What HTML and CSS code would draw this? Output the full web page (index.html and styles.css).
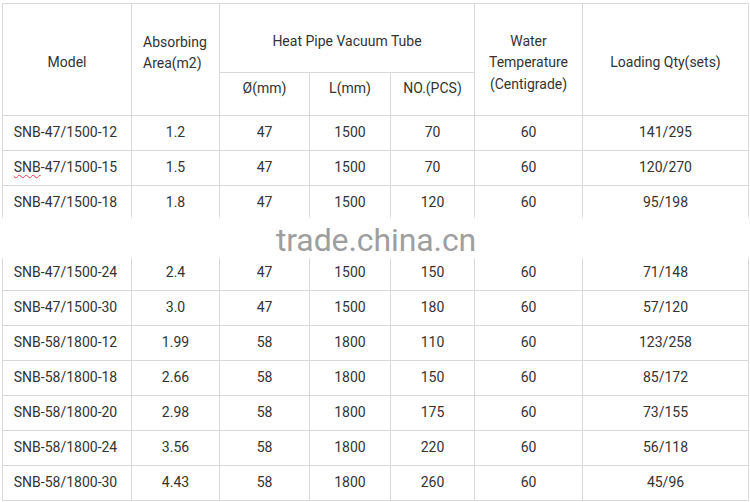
FILE: index.html
```html
<!DOCTYPE html>
<html>
<head>
<meta charset="utf-8">
<link rel="stylesheet" href="styles.css">
</head>
<body>
<div class="page">
  <div class="sheet">
    <table class="spec">
      <colgroup>
        <col class="c1"><col class="c2"><col class="c3"><col class="c4"><col class="c5"><col class="c6"><col class="c7">
      </colgroup>
      <thead>
        <tr class="h1">
          <th rowspan="2">Model</th>
          <th rowspan="2" class="left">Absorbing Area(m2)</th>
          <th colspan="3">Heat Pipe Vacuum Tube</th>
          <th rowspan="2" class="water">Water Temperature (Centigrade)</th>
          <th rowspan="2">Loading Qty(sets)</th>
        </tr>
        <tr class="h2">
          <th>Ø(mm)</th>
          <th>L(mm)</th>
          <th>NO.(PCS)</th>
        </tr>
      </thead>
      <tbody>
        <tr><td class="model">SNB-47/1500-12</td><td>1.2</td><td>47</td><td>1500</td><td>70</td><td>60</td><td>141/295</td></tr>
        <tr><td class="model"><span class="spell">SNB</span>-47/1500-15</td><td>1.5</td><td>47</td><td>1500</td><td>70</td><td>60</td><td>120/270</td></tr>
        <tr><td class="model">SNB-47/1500-18</td><td>1.8</td><td>47</td><td>1500</td><td>120</td><td>60</td><td>95/198</td></tr>
        <tr class="hidden-row"><td></td><td></td><td></td><td></td><td></td><td></td><td></td></tr>
        <tr><td class="model">SNB-47/1500-24</td><td>2.4</td><td>47</td><td>1500</td><td>150</td><td>60</td><td>71/148</td></tr>
        <tr><td class="model">SNB-47/1500-30</td><td>3.0</td><td>47</td><td>1500</td><td>180</td><td>60</td><td>57/120</td></tr>
        <tr><td class="model">SNB-58/1800-12</td><td>1.99</td><td>58</td><td>1800</td><td>110</td><td>60</td><td>123/258</td></tr>
        <tr><td class="model">SNB-58/1800-18</td><td>2.66</td><td>58</td><td>1800</td><td>150</td><td>60</td><td>85/172</td></tr>
        <tr><td class="model">SNB-58/1800-20</td><td>2.98</td><td>58</td><td>1800</td><td>175</td><td>60</td><td>73/155</td></tr>
        <tr><td class="model">SNB-58/1800-24</td><td>3.56</td><td>58</td><td>1800</td><td>220</td><td>60</td><td>56/118</td></tr>
        <tr><td class="model">SNB-58/1800-30</td><td>4.43</td><td>58</td><td>1800</td><td>260</td><td>60</td><td>45/96</td></tr>
      </tbody>
    </table>
    <div class="watermark"><span>trade.china.cn</span></div>
  </div>
</div>
</body>
</html>
```
FILE: styles.css
```css
html, body {
  margin: 0;
  padding: 0;
  background: #ffffff;
}
.page {
  padding: 3px 0 0 2px;
  font-family: Roboto, "Liberation Sans", Arial, sans-serif;
  color: #333333;
}
.sheet {
  position: relative;
  width: 746px;
}
.spec {
  border-collapse: collapse;
  table-layout: fixed;
  width: 746px;
  font-size: 14px;
}
.spec col.c1 { width: 129px; }
.spec col.c2 { width: 88px; }
.spec col.c3 { width: 90px; }
.spec col.c4 { width: 81px; }
.spec col.c5 { width: 84px; }
.spec col.c6 { width: 108px; }
.spec col.c7 { width: 166px; }
.spec th, .spec td {
  border: 1px solid #d9d9d9;
  text-align: center;
  vertical-align: middle;
  padding: 0 4px;
  font-weight: normal;
  line-height: 21.5px;
}
.spec tr.h1 { height: 69px; }
.spec tr.h1 th { padding-top: 7px; }
.spec tr.h1 th.left {
  text-align: left;
  padding: 0 4px 13px 11px;
}
.spec tr.h1 th.water {
  padding: 7px 8px 0;
}
.spec tr.h2 { height: 43px; }
.spec tr.h2 th { padding-bottom: 10px; }
.spec tbody tr { height: 35px; }
.spec td.model {
  padding: 0 5px 0 2px;
}
.spell {
  text-decoration: underline wavy #e04040;
  text-decoration-thickness: 1px;
  text-underline-offset: 2px;
}
.watermark {
  position: absolute;
  left: -2px;
  right: -2px;
  top: 212px;
  height: 46px;
  background: linear-gradient(to bottom, rgba(255,255,255,0) 0px, #ffffff 5px, #ffffff 41px, rgba(255,255,255,0) 46px);
  display: flex;
  justify-content: center;
  align-items: center;
}
.watermark span {
  font-family: Roboto, "Liberation Sans", Arial, sans-serif;
  font-size: 32px;
  color: #9e9e9e;
  letter-spacing: -0.1px;
  margin-left: 2px;
  margin-top: 3px;
}
```
